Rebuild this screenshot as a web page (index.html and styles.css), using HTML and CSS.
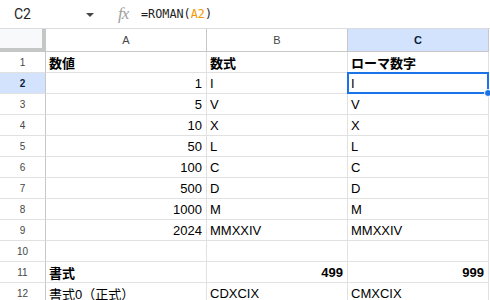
FILE: index.html
```html
<!DOCTYPE html>
<html lang="ja">
<head>
    <meta charset="UTF-8">
    <title>ROMAN</title>
    <link rel="stylesheet" href="styles.css">
</head>
<body>
    <div class="formula-bar">
        <div class="name-box">C2</div>
        <div class="name-arrow"></div>
        <div class="fx">fx</div>
        <div class="formula">=ROMAN(<span class="ref">A2</span>)</div>
    </div>
    <div class="sheet">
        <div class="corner"></div>
        <div class="col-head">A</div>
        <div class="col-head">B</div>
        <div class="col-head active">C</div>

        <div class="row-head">1</div>
        <div class="cell bold">数値</div>
        <div class="cell bold">数式</div>
        <div class="cell bold">ローマ数字</div>

        <div class="row-head active">2</div>
        <div class="cell num">1</div>
        <div class="cell">I</div>
        <div class="cell selected">I<span class="handle"></span></div>

        <div class="row-head">3</div>
        <div class="cell num">5</div>
        <div class="cell">V</div>
        <div class="cell">V</div>

        <div class="row-head">4</div>
        <div class="cell num">10</div>
        <div class="cell">X</div>
        <div class="cell">X</div>

        <div class="row-head">5</div>
        <div class="cell num">50</div>
        <div class="cell">L</div>
        <div class="cell">L</div>

        <div class="row-head">6</div>
        <div class="cell num">100</div>
        <div class="cell">C</div>
        <div class="cell">C</div>

        <div class="row-head">7</div>
        <div class="cell num">500</div>
        <div class="cell">D</div>
        <div class="cell">D</div>

        <div class="row-head">8</div>
        <div class="cell num">1000</div>
        <div class="cell">M</div>
        <div class="cell">M</div>

        <div class="row-head">9</div>
        <div class="cell num">2024</div>
        <div class="cell">MMXXIV</div>
        <div class="cell">MMXXIV</div>

        <div class="row-head">10</div>
        <div class="cell"></div>
        <div class="cell"></div>
        <div class="cell"></div>

        <div class="row-head">11</div>
        <div class="cell bold">書式</div>
        <div class="cell num bold">499</div>
        <div class="cell num bold">999</div>

        <div class="row-head">12</div>
        <div class="cell">書式0（正式）</div>
        <div class="cell">CDXCIX</div>
        <div class="cell">CMXCIX</div>
    </div>
</body>
</html>
```

FILE: styles.css
```css
body {
    margin: 0;
    background: #ffffff;
    font-family: "Liberation Sans", Arial, "Noto Sans CJK JP", sans-serif;
    color: #000000;
    overflow: hidden;
}
.formula-bar {
    height: 28px;
    border-bottom: 1px solid #dadce0;
    display: flex;
    align-items: center;
}
.name-box {
    width: 72px;
    padding-left: 14px;
    font-family: Roboto, "Liberation Sans", sans-serif;
    font-size: 14px;
    color: #1f1f1f;
}
.name-arrow {
    width: 0;
    height: 0;
    border-left: 4px solid transparent;
    border-right: 4px solid transparent;
    border-top: 4px solid #444746;
    margin-top: 1px;
}
.fx {
    margin-left: 24px;
    width: 23px;
    font-family: "Liberation Serif", serif;
    font-style: italic;
    font-size: 17px;
    color: #a0a0a0;
    letter-spacing: -1px;
}
.formula {
    font-family: "DejaVu Sans Mono", monospace;
    font-size: 11.8px;
    color: #1f1f1f;
    margin-top: -1px;
}
.ref {
    color: #f29900;
}
.sheet {
    display: grid;
    grid-template-columns: 46px 161px 141px 141px;
    grid-template-rows: 23px;
    grid-auto-rows: 21px;
}
.corner {
    background: #f8f9fa;
    border-right: 4px solid #c4c7c5;
    border-bottom: 4px solid #c4c7c5;
}
.col-head,
.row-head {
    display: flex;
    align-items: center;
    justify-content: center;
    font-family: "Liberation Sans", Arial, sans-serif;
    font-size: 10px;
    color: #444746;
    border-right: 1px solid #c7c7c7;
    border-bottom: 1px solid #c7c7c7;
    background: #ffffff;
}
.col-head {
    font-size: 11px;
}
.row-head {
    border-bottom-color: #e1e1e1;
}
.col-head.active,
.row-head.active {
    background: #d3e3fd;
    color: #0b1f3a;
    font-weight: bold;
}
.cell {
    position: relative;
    display: flex;
    align-items: center;
    padding: 0 4px 0 3px;
    font-size: 13px;
    white-space: nowrap;
    border-right: 1px solid #e1e1e1;
    border-bottom: 1px solid #e1e1e1;
}
.bold {
    font-weight: bold;
}
.num {
    justify-content: flex-end;
}
.selected::after {
    content: '';
    position: absolute;
    left: -1px;
    top: -1px;
    right: -1px;
    bottom: -1px;
    border: 2px solid #1a73e8;
}
.handle {
    position: absolute;
    right: -4px;
    bottom: -4px;
    width: 6px;
    height: 6px;
    border-radius: 50%;
    background: #1a73e8;
    border: 1px solid #ffffff;
    z-index: 2;
}
```
